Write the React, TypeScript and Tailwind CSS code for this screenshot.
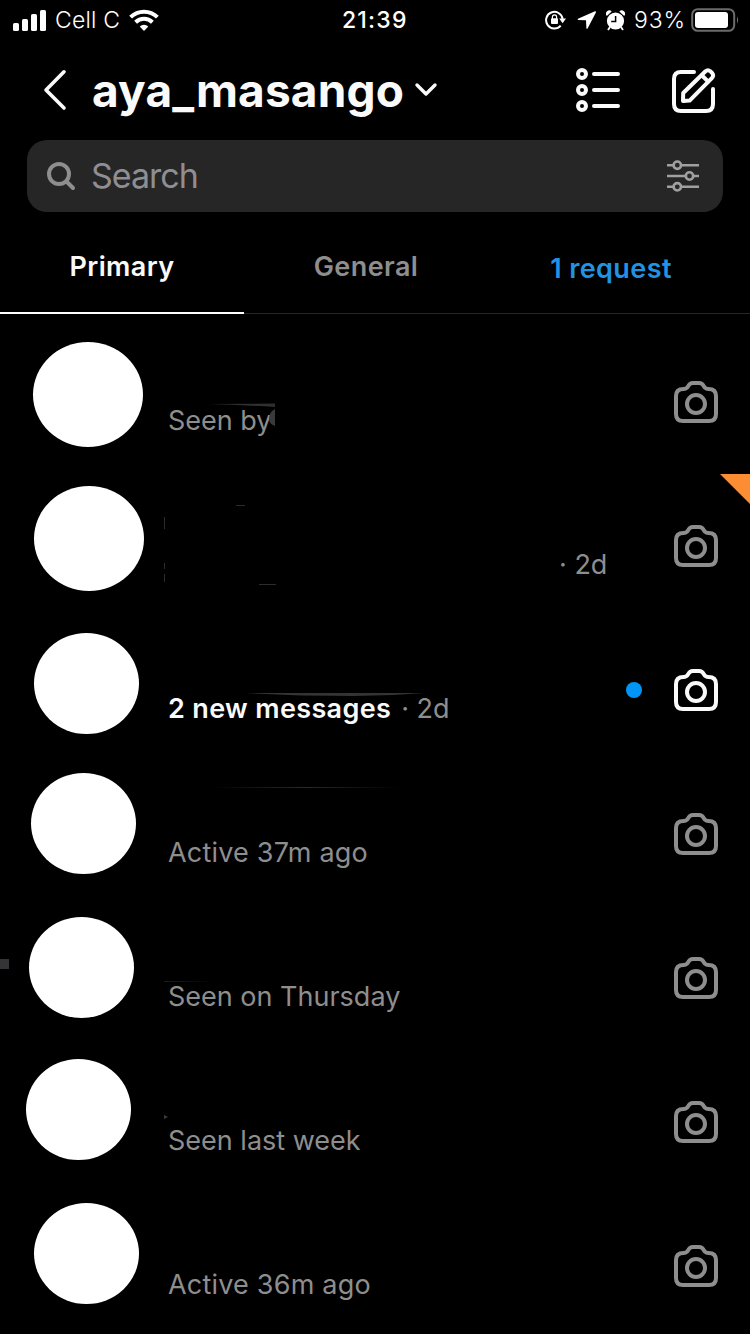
import { ReactNode } from 'react'
import clsx from 'clsx'

type Thread = {
  avatar: string
  text?: string
  textClass?: string
  unread?: string
  time?: string
  timeClass?: string
  marks?: ReactNode
}

const threads: Thread[] = [
  {
    avatar: 'ml-[33px] mt-[10px] w-[110px] h-[105px]',
    text: 'Seen by',
    marks: (
      <svg className="absolute left-[168px] top-[68px]" width="110" height="30" viewBox="0 0 110 30">
        <path d="M40 4 L107 3.5 V7 Q75 5 40 4Z" fill="#303032" />
        <path d="M107 9 Q101 12 101 19 Q101 24 107 26Z" fill="#3a3a3c" />
      </svg>
    ),
  },
  {
    avatar: 'ml-[34px] mt-[10px] w-[110px] h-[105px]',
    time: '2d',
    timeClass: 'ml-[391px]',
    marks: (
      <>
        <svg className="absolute left-[160px] top-[26px]" width="120" height="86" viewBox="0 0 120 86" stroke="#2c2c2e">
          <path d="M4.5 15v12M4.5 61v6M4.5 72v8" />
          <path d="M76 3.5h9M99 82.5h17" />
        </svg>
        <svg className="absolute right-0 -top-[2px]" width="30" height="30" viewBox="0 0 30 30">
          <path d="M0 0H30V30Z" fill="#fd8d32" />
        </svg>
      </>
    ),
  },
  {
    avatar: 'ml-[34px] mt-[13px] w-[105px] h-[101px]',
    unread: '2 new messages',
    time: '2d',
    timeClass: 'ml-[10px]',
    marks: (
      <svg className="absolute left-[244px] top-[72px]" width="182" height="6" viewBox="0 0 182 6">
        <path d="M2 1 H180 Q145 4 110 4 Q50 4 2 1Z" fill="#343436" />
      </svg>
    ),
  },
  {
    avatar: 'ml-[31px] mt-[9px] w-[105px] h-[101px]',
    text: 'Active 37m ago',
    textClass: 'tracking-[0.2px]',
    marks: <div className="absolute left-[210px] top-[23px] h-px w-[190px] bg-linear-to-r from-transparent via-[#29292b] to-transparent" />,
  },
  {
    avatar: 'ml-[29px] mt-[9px] w-[105px] h-[101px]',
    text: 'Seen on Thursday',
    marks: (
      <>
        <div className="absolute left-0 top-[51px] h-[10px] w-[9px] bg-[#343436]" />
        <div className="absolute left-[164px] top-[73px] h-px w-[50px] bg-linear-to-r from-[#1c1c1e] to-transparent" />
      </>
    ),
  },
  {
    avatar: 'ml-[26px] mt-[7px] w-[105px] h-[101px]',
    text: 'Seen last week',
    marks: (
      <svg className="absolute left-[164px] top-[63px]" width="4" height="4" viewBox="0 0 4 4">
        <path d="M0 0L4 2L0 4Z" fill="#3c3c3e" />
      </svg>
    ),
  },
  {
    avatar: 'ml-[34px] mt-[7px] w-[105px] h-[101px]',
    text: 'Active 36m ago',
    textClass: 'tracking-[0.2px]',
  },
]

function StatusBar() {
  return (
    <div className="relative flex h-10 shrink-0 items-center justify-between pl-[13px] pr-[10px] text-[23px] leading-none">
      <div className="flex items-center">
        <svg width="33" height="22" viewBox="0 0 33 22" fill="#fff">
          <rect x="0" y="14" width="6" height="8" rx="1.6" />
          <rect x="9" y="10" width="6" height="12" rx="1.6" />
          <rect x="18" y="5" width="6" height="17" rx="1.6" />
          <rect x="27" y="1" width="6" height="21" rx="1.6" />
        </svg>
        <span className="ml-[9px] w-[67px] whitespace-nowrap pt-px font-light tracking-[0.2px]">Cell C</span>
        <svg className="ml-[7px]" width="30" height="22" viewBox="0 0 30 22" fill="none" stroke="#fff" strokeWidth="4">
          <path d="M1.6 8.2a19 19 0 0 1 26.8 0" />
          <path d="M6.6 13.2a12 12 0 0 1 16.8 0" />
          <path d="M15 22l-4.3-4.4a6.2 6.2 0 0 1 8.6 0Z" fill="#fff" stroke="none" />
        </svg>
      </div>
      <span className="absolute left-[342px] top-[9px] font-medium tracking-[1.2px]">21:39</span>
      <div className="flex items-center">
        <svg width="21" height="20" viewBox="0 0 21 20" fill="none">
          <path d="M15.7 15.6A8.3 8.3 0 1 1 17.6 9" stroke="#fff" strokeWidth="2" />
          <path d="M14.2 8.5h6.8l-3.4 4.8Z" fill="#fff" />
          <rect x="6" y="8.3" width="7" height="5.8" rx="1" fill="#fff" />
          <path d="M7.4 9V7a2.1 2.1 0 0 1 4.2 0v2" stroke="#fff" strokeWidth="1.2" />
        </svg>
        <svg className="ml-[11px]" width="20" height="20" viewBox="0 0 20 20" fill="#fff">
          <path d="M18 1.3 1 8.8q-1 .7.2 1.1L9 10.2l.4 8q.5 1.4 1.3.1L18.9 2.4q.3-1.4-.9-1.1Z" />
        </svg>
        <svg className="ml-[9px]" width="19" height="21" viewBox="0 0 19 21">
          <circle cx="9.5" cy="11" r="8.6" fill="#fff" />
          <path d="M.8 6a3.2 3.2 0 0 1 4.9-4.4ZM18.2 6a3.2 3.2 0 0 0-4.9-4.4Z" fill="#fff" />
          <path d="M4 17 2 20M15 17l2 3" stroke="#fff" strokeWidth="1.8" />
          <path d="M9.6 6v5.4H5.2" fill="none" stroke="#000" strokeWidth="1.5" />
        </svg>
        <span className="ml-[9px] w-[52px] whitespace-nowrap pt-px font-light tracking-[0.9px]">93%</span>
        <svg className="ml-[5px]" width="49" height="24" viewBox="0 0 49 24">
          <rect x="1.2" y="1.2" width="42" height="21.6" rx="5.5" fill="none" stroke="#6b6b6b" strokeWidth="2" />
          <rect x="4" y="4" width="33" height="16" rx="3" fill="#fff" />
          <path d="M46 8.5q2.4 3.5 0 7Z" fill="#6b6b6b" />
        </svg>
      </div>
    </div>
  )
}

function Header() {
  return (
    <header className="flex h-[100px] shrink-0 items-center pl-[43px] pr-[33px]">
      <svg width="24" height="42" viewBox="0 0 24 42" fill="none" stroke="#fafafa" strokeWidth="3.6" strokeLinecap="round" strokeLinejoin="round">
        <path d="M21 2.8 3 21l18 18" />
      </svg>
      <h1 className="ml-[25px] w-[313px] whitespace-nowrap text-[46px] font-bold leading-none tracking-[0.15px] text-[#fafafa]">aya_masango</h1>
      <svg className="ml-[9px]" width="24" height="16" viewBox="0 0 24 16" fill="none" stroke="#fafafa" strokeWidth="3.4" strokeLinecap="round" strokeLinejoin="round">
        <path d="M3 3l9 9 9-9" />
      </svg>
      <svg className="ml-auto" width="46" height="46" viewBox="0 0 46 46" fill="none" stroke="#fafafa" strokeWidth="4" strokeLinecap="round">
        <circle cx="7" cy="7" r="4" />
        <circle cx="7" cy="23" r="4" />
        <circle cx="7" cy="39" r="4" />
        <path d="M19 7h24M19 23h24M19 39h24" />
      </svg>
      <svg className="ml-[50px]" width="46" height="46" viewBox="0 0 46 46" fill="none" stroke="#fafafa" strokeWidth="4" strokeLinecap="round" strokeLinejoin="round">
        <path d="M23 5H10q-7 0-7 7v25q0 7 7 7h25q7 0 7-7V22" />
        <path d="m12 34 .2-8L34.5 4.2q2.4-2 4.8 0l1.8 1.8q2 2.4 0 4.8L18.6 33.6Z" />
        <path d="m31 8.5 6.2 6.2" />
      </svg>
    </header>
  )
}

function SearchBar() {
  return (
    <div className="mx-[27px] flex h-[72px] shrink-0 items-center rounded-[20px] bg-[#262626] pl-[19px] pr-[23px]">
      <svg width="30" height="30" viewBox="0 0 30 30" fill="none" stroke="#8e8e8e" strokeWidth="4" strokeLinecap="round">
        <circle cx="13" cy="13" r="10" />
        <path d="m20.5 20.5 6.5 6.5" />
      </svg>
      <span className="ml-[15px] text-[34px] leading-none tracking-[-1px] text-[#8e8e93]">Search</span>
      <svg className="ml-auto" width="34" height="34" viewBox="0 0 34 34" fill="none" stroke="#a0a0a0" strokeWidth="2.6">
        <path d="M1 6.2h6M15.500 6.200H33M1 17h18M27.500 17H33M1 27.800h6M15.500 27.800H33" />
        <circle cx="11.300" cy="6.200" r="3.700" />
        <circle cx="23.500" cy="17" r="3.700" />
        <circle cx="11.300" cy="27.800" r="3.700" />
      </svg>
    </div>
  )
}

function Tabs() {
  return (
    <nav className="grid h-[102px] shrink-0 grid-cols-[244px_244px_246px] text-center text-[27px] font-semibold leading-none tracking-[0.4px] shadow-[inset_0_-1px_0_#262626]">
      <span className="border-b-2 border-white pt-[41px] text-[#fafafa]">Primary</span>
      <span className="pt-[41px] text-[#8e8e8e]">General</span>
      <span className="pt-[43px] text-[#2093e6]">1 request</span>
    </nav>
  )
}

function CameraIcon({ active }: { active?: boolean }) {
  return (
    <svg
      className={clsx('shrink-0', active ? 'text-[#fafafa]' : 'text-[#8e8e8e]')}
      width="44"
      height="42"
      viewBox="0 0 44 42"
      fill="none"
      stroke="currentColor"
      strokeWidth="4"
      strokeLinejoin="round"
    >
      <path d="M9.500 8Q12.500 8 14 5.500Q15.500 2 19 2H25Q28.500 2 30 5.500Q31.500 8 34.500 8Q42 8 42 15V33Q42 40 35 40H9Q2 40 2 33V15Q2 8 9.500 8Z" />
      <circle cx="22" cy="23" r="9" />
    </svg>
  )
}

function ThreadRow({ thread }: { thread: Thread }) {
  return (
    <li className="relative flex h-36 shrink-0">
      <div className="w-[168px] shrink-0">
        <div className={clsx('rounded-[50%] bg-white', thread.avatar)} />
      </div>
      <div className="mt-[73px] flex h-[29px] flex-1 items-center whitespace-nowrap pt-[2px] text-[27px] leading-none text-[#8e8e8e]">
        {thread.text && <span className={thread.textClass}>{thread.text}</span>}
        {thread.unread && <span className="font-semibold tracking-[0.35px] text-[#fafafa]">{thread.unread}</span>}
        {thread.time && <span className={thread.timeClass}>· {thread.time}</span>}
      </div>
      {thread.unread && <div className="mr-8 mt-[62px] size-4 rounded-full bg-[#0095f6]" />}
      <div className="mr-8 mt-[49px]">
        <CameraIcon active={!!thread.unread} />
      </div>
      {thread.marks}
    </li>
  )
}

export default function App() {
  return (
    <div className="flex h-[1334px] w-[750px] flex-col overflow-hidden bg-black font-['Inter',sans-serif] text-white">
      <StatusBar />
      <Header />
      <SearchBar />
      <Tabs />
      <ul className="flex shrink-0 flex-col pt-[18px]">
        {threads.map((thread, i) => (
          <ThreadRow key={i} thread={thread} />
        ))}
      </ul>
    </div>
  )
}
